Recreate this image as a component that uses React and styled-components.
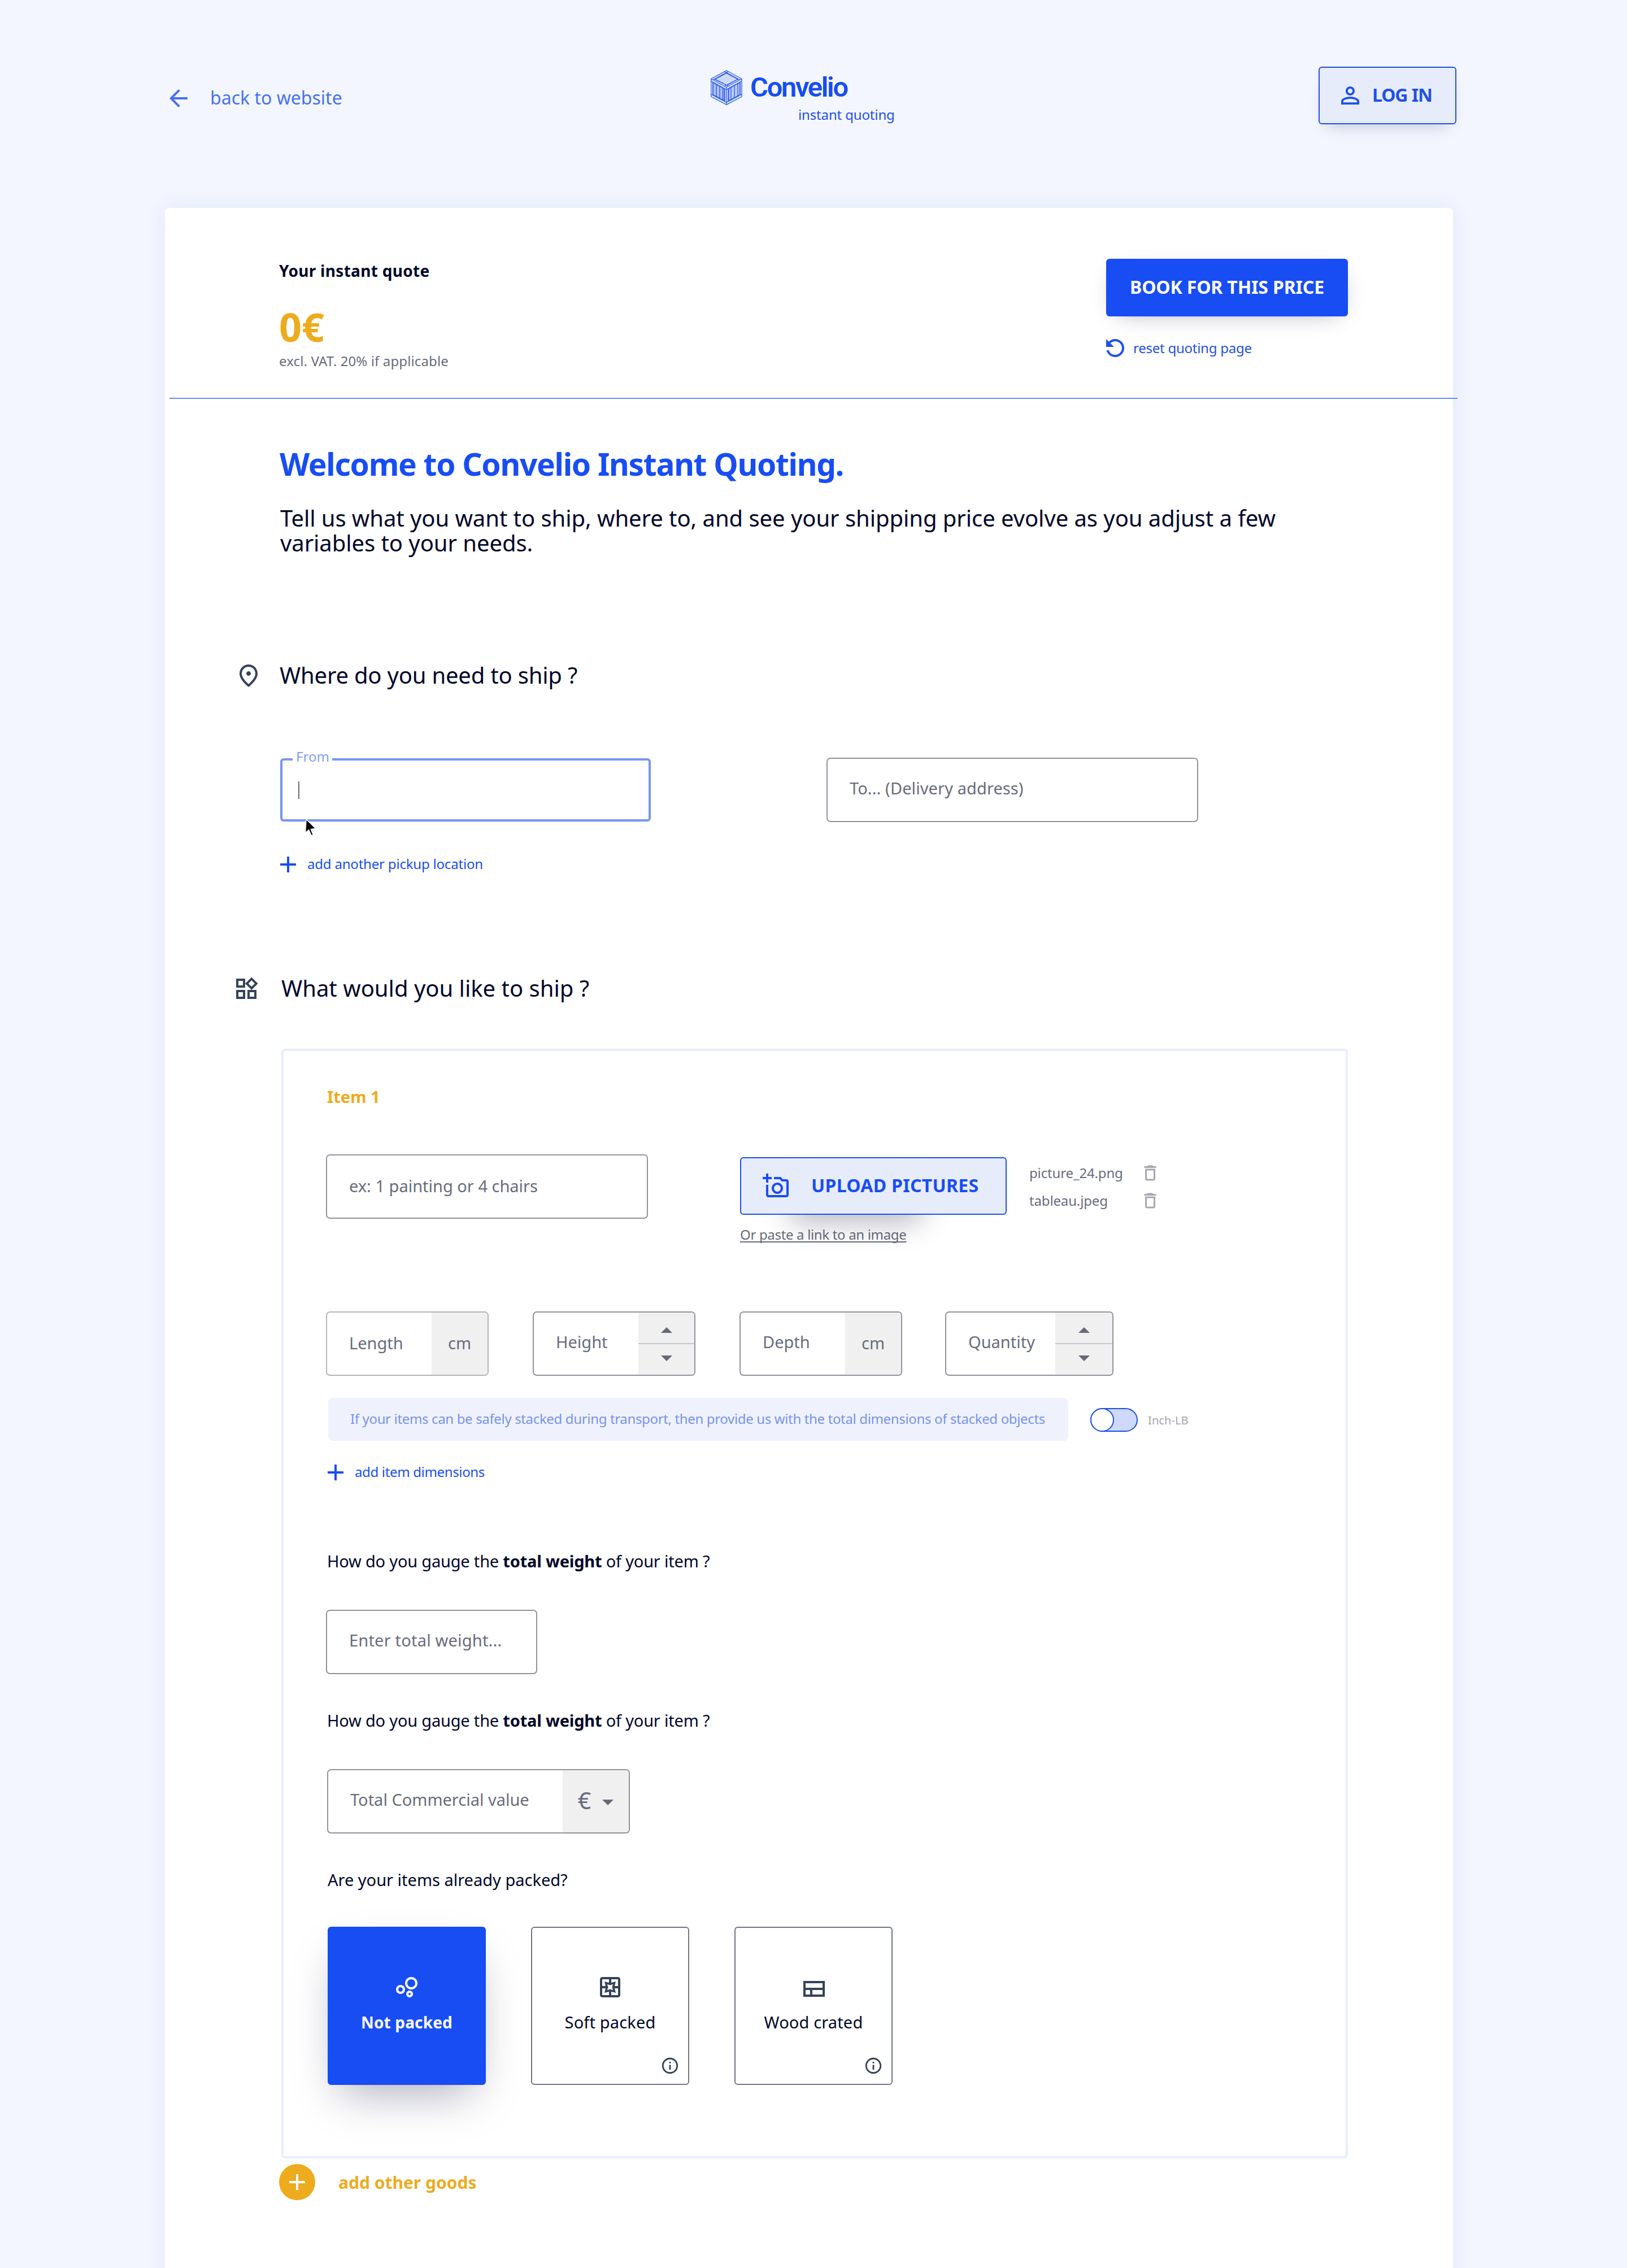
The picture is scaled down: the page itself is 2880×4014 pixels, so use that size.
import React from 'react'
import styled, { createGlobalStyle, ThemeProvider } from 'styled-components'
import {
  MdAdd,
  MdArrowBack,
  MdDeleteOutline,
  MdInfoOutline,
  MdOutlineAddAPhoto,
  MdOutlineBubbleChart,
  MdOutlinePages,
  MdOutlinePlace,
  MdOutlineWidgets,
  MdPersonOutline,
  MdRefresh,
} from 'react-icons/md'

const theme = {
  color: {
    page: '#f3f6ff',
    primary: '#184df4',
    primaryText: '#1f50e8',
    primarySoft: '#4772ee',
    primaryPale: '#7795f2',
    primaryTint: '#e7ecfb',
    accent: '#eeab1e',
    text: '#00062a',
    icon: '#35425a',
    muted: '#686b7c',
    border: '#92929c',
    addon: '#f0f0f0',
  },
}

const GlobalStyle = createGlobalStyle`
  *, *::before, *::after {
    box-sizing: border-box;
  }

  body {
    margin: 0;
    background: #f3f6ff;
    font-family: "Noto Sans", "Liberation Sans", sans-serif;
  }

  svg {
    display: block;
    flex-shrink: 0;
  }
`

const Page = styled.div`
  width: 2880px;
  height: 4014px;
  overflow: hidden;
  background: ${props => props.theme.color.page};
  color: ${props => props.theme.color.text};
`

const Header = styled.header`
  display: grid;
  grid-template-columns: 966px 1fr auto;
  align-items: start;
  height: 368px;
  padding: 118px 302px 0 292px;
`

const BackLink = styled.a`
  display: flex;
  align-items: center;
  gap: 32px;
  margin-top: 32px;
  color: ${props => props.theme.color.primarySoft};
  font-size: 32px;
  line-height: 43px;

  span {
    padding-bottom: 4px;
  }
`

const Logo = styled.div`
  margin-top: 6px;
`

const LogoRow = styled.div`
  display: flex;
  align-items: center;
  gap: 14px;
`

const LogoName = styled.div`
  color: ${props => props.theme.color.primary};
  font-family: Roboto, "Noto Sans", sans-serif;
  font-size: 49px;
  font-weight: 600;
  line-height: 62px;
  letter-spacing: -2.4px;
`

const LogoTagline = styled.div`
  margin: 1px 0 0 155px;
  color: ${props => props.theme.color.primaryText};
  font-size: 24px;
  line-height: 32px;
  letter-spacing: -0.15px;
`

const Button = styled.button`
  position: relative;
  display: flex;
  align-items: center;
  width: ${props => props.$width}px;
  height: 102px;
  padding: 0;
  border: 2px solid ${props => props.theme.color.primaryText};
  border-radius: 6px;
  background: ${props => props.theme.color.primaryTint};
  color: ${props => props.theme.color.primaryText};
  font-family: inherit;
  font-size: 32px;
  font-weight: bold;
  line-height: 42px;
  white-space: nowrap;

  span {
    padding-bottom: 3px;
  }
`

const LoginButton = styled(Button)`
  gap: 15px;
  padding-left: 30px;
  letter-spacing: -1.1px;
  box-shadow: 0 16px 30px -14px rgba(0, 6, 42, 0.2);
`

const BookButton = styled(Button)`
  justify-content: center;
  border-color: ${props => props.theme.color.primary};
  background: ${props => props.theme.color.primary};
  color: #fff;
  letter-spacing: -0.15px;
  box-shadow: 2px 10px 44px -20px rgba(0, 10, 60, 0.42);
`

const UploadButton = styled(Button)`
  gap: 38px;
  padding-left: 38px;
  color: ${props => props.theme.color.primary};
  letter-spacing: 0.3px;
`

// The shadow is narrower than the button and sits towards its left side
const UploadWrap = styled.div`
  position: relative;
  z-index: 0;

  &::before {
    content: "";
    position: absolute;
    z-index: -1;
    top: 30px;
    left: 90px;
    width: 230px;
    height: 66px;
    border-radius: 6px;
    box-shadow: 0 16px 54px rgba(0, 6, 42, 0.32);
  }
`

const Card = styled.main`
  width: 2280px;
  height: 3700px;
  margin-left: 292px;
  border-radius: 8px;
  background: #fff;
  box-shadow: 0 0 36px rgba(40, 80, 180, 0.09);
`

const QuoteBar = styled.section`
  display: flex;
  justify-content: space-between;
  height: 336px;
  padding: 90px 186px 0 202px;
`

const QuoteTitle = styled.div`
  margin-top: 3px;
  font-size: 28px;
  font-weight: bold;
  line-height: 36px;
  letter-spacing: 0.3px;
`

const Price = styled.div`
  margin-top: 41px;
  color: ${props => props.theme.color.accent};
  font-size: 70px;
  font-weight: bold;
  line-height: 80px;
`

const Vat = styled.div`
  margin-top: 5px;
  color: ${props => props.theme.color.muted};
  font-size: 24px;
  line-height: 32px;
  letter-spacing: 0.12px;
`

const ResetLink = styled.a`
  display: flex;
  align-items: center;
  gap: 8px;
  margin: 32px 0 0 -8px;
  color: ${props => props.theme.color.primaryText};
  font-size: 24px;
  line-height: 32px;
  letter-spacing: -0.25px;

  svg {
    transform: scaleX(-1);
  }
`

const Divider = styled.div`
  width: 2280px;
  height: 2px;
  margin-left: 8px;
  background: #6f8de8;
`

const Intro = styled.section`
  padding: 83px 0 0 203px;
`

const Welcome = styled.h1`
  margin: 0;
  color: ${props => props.theme.color.primary};
  font-size: 55px;
  line-height: 64px;
  letter-spacing: -1.28px;
`

const Lead = styled.p`
  margin: 42px 0 0 1px;
  font-size: 40px;
  line-height: 44px;
  letter-spacing: -0.06px;
`

const SectionTitle = styled.h2`
  display: flex;
  align-items: center;
  gap: ${props => props.$gap}px;
  margin: ${props => props.$top}px 0 0;
  padding-left: ${props => props.$left}px;
  font-size: 40px;
  font-weight: normal;
  line-height: 45px;
  letter-spacing: ${props => props.$spacing || 0}px;

  svg {
    color: ${props => props.theme.color.icon};
  }

  span {
    padding-bottom: 3px;
  }
`

const Addresses = styled.div`
  display: flex;
  align-items: flex-start;
  gap: 311px;
  padding: 121px 0 0 204px;
`

const FocusedField = styled.div`
  position: relative;
  display: flex;
  align-items: center;
  width: 656px;
  height: 112px;
  margin-top: 1px;
  padding-left: 28px;
  border: 4px solid ${props => props.theme.color.primaryPale};
  border-radius: 6px;
`

const FloatingLabel = styled.span`
  position: absolute;
  top: -21px;
  left: 18px;
  width: 70px;
  padding-left: 6px;
  background: #fff;
  color: #86a0ef;
  font-size: 24px;
  line-height: 28px;
`

const Caret = styled.span`
  width: 2px;
  height: 31px;
  background: ${props => props.theme.color.muted};
`

const Pointer = styled.svg`
  position: absolute;
  top: 102px;
  left: 38px;
`

const Field = styled.div`
  display: flex;
  width: ${props => props.$width}px;
  height: 114px;
  margin-left: ${props => props.$left || 0}px;
  border: 2px solid ${props => props.$light ? '#b4b4b9' : props.theme.color.border};
  border-radius: 7px;
  overflow: hidden;
`

const Placeholder = styled.div`
  flex: 1;
  align-self: center;
  padding: 0 0 ${props => props.$lift === undefined ? 6 : props.$lift}px 39px;
  color: ${props => props.theme.color.muted};
  font-size: 29px;
  line-height: 40px;
  letter-spacing: ${props => props.$spacing || 0}px;
  white-space: nowrap;
`

const Addon = styled.div`
  display: flex;
  align-items: center;
  justify-content: center;
  width: ${props => props.$width || 99}px;
  background: ${props => props.theme.color.addon};
  color: ${props => props.theme.color.muted};
  font-size: 29px;
  line-height: 38px;

  span {
    padding-bottom: 3px;
  }
`

const Spinner = styled(Addon)`
  flex-direction: column;
`

const Step = styled.div`
  display: flex;
  align-items: center;
  justify-content: center;
  width: 100%;
  height: 54px;

  &:first-child {
    padding-top: 8px;
  }

  &:last-child {
    height: 56px;
    padding-bottom: 5px;
    border-top: 2px solid #c8c8ca;
  }
`

const Currency = styled(Addon)`
  gap: 20px;
  font-size: 41px;
  line-height: 48px;

  span {
    padding-bottom: 5px;
  }

  svg {
    margin-top: 3px;
  }
`

const AddLink = styled.a`
  display: flex;
  align-items: center;
  gap: 10px;
  margin: ${props => props.$top}px 0 0 ${props => props.$left}px;
  color: ${props => props.theme.color.primary};
  font-size: 24px;
  line-height: 32px;
  letter-spacing: ${props => props.$spacing}px;

  span {
    padding-bottom: 2px;
  }
`

const ItemPanel = styled.section`
  width: 1888px;
  height: 1964px;
  margin: 82px 0 0 206px;
  padding: 63px 0 0 75px;
  border: 4px solid #e8edfb;
  border-radius: 6px;
`

const ItemTitle = styled.h3`
  margin: 0 0 84px 2px;
  color: ${props => props.theme.color.accent};
  font-size: 29px;
  font-weight: bold;
  line-height: 36px;
`

const DescriptionRow = styled.div`
  display: flex;
  align-items: flex-start;
  height: 157px;
`

const Upload = styled.div`
  margin: 5px 0 0 163px;
`

const PasteLink = styled.a`
  display: block;
  margin-top: 19px;
  color: ${props => props.theme.color.muted};
  font-size: 24px;
  line-height: 32px;
  letter-spacing: -0.33px;
  text-decoration: underline;
  text-decoration-skip-ink: none;
  text-decoration-thickness: 1.5px;
  text-underline-offset: 3px;
`

const Files = styled.div`
  margin: 8px 0 0 40px;
`

const FileRow = styled.div`
  display: grid;
  grid-template-columns: 196px 36px;
  align-items: center;
  height: 49px;
  color: ${props => props.theme.color.muted};
  font-size: 24px;
  line-height: 32px;
  letter-spacing: -0.15px;

  svg {
    color: #a6a6b0;
  }
`

const Dimensions = styled.div`
  display: grid;
  grid-template-columns: 366px 366px 364px 298px;
  margin-top: 121px;
`

const HintRow = styled.div`
  display: flex;
  align-items: center;
  margin: 39px 0 0 4px;
`

const Hint = styled.div`
  width: 1310px;
  height: 76px;
  padding: 21px 0 0 39px;
  border-radius: 8px;
  background: #eff2fc;
  color: #7893ea;
  font-size: 24px;
  line-height: 32px;
  letter-spacing: -0.35px;
  white-space: nowrap;
`

const Toggle = styled.div`
  width: 84px;
  height: 42px;
  margin: 2px 18px 0 39px;
  border: 2px solid ${props => props.theme.color.primaryText};
  border-radius: 21px;
  background: #ced9fb;
`

const Knob = styled.div`
  width: 42px;
  height: 42px;
  margin: -2px 0 0 -2px;
  border: 2px solid ${props => props.theme.color.primaryText};
  border-radius: 50%;
  background: #fff;
`

const UnitSystem = styled.div`
  padding-top: 3px;
  color: #a3a4ac;
  font-size: 20px;
  line-height: 28px;
  letter-spacing: 0.1px;
`

const Question = styled.p`
  margin: ${props => props.$top}px 0 ${props => props.$bottom}px ${props => props.$left}px;
  font-size: 29px;
  line-height: 36px;
  letter-spacing: ${props => props.$spacing || 0}px;
`

const Packings = styled.div`
  display: flex;
  gap: 80px;
  margin-left: 3px;
`

const Packing = styled.div`
  position: relative;
  display: flex;
  flex-direction: column;
  align-items: center;
  gap: 20px;
  width: 280px;
  height: 280px;
  padding-top: 81px;
  border: 2px solid ${props => props.$active ? props.theme.color.primary : '#6f7582'};
  border-radius: 6px;
  background: ${props => props.$active ? props.theme.color.primary : '#fff'};
  color: ${props => props.$active ? '#fff' : props.theme.color.icon};
  box-shadow: ${props => props.$active ? '0 36px 76px -24px rgba(0, 10, 60, 0.34)' : 'none'};
`

const PackingName = styled.div`
  color: ${props => props.$active ? '#fff' : props.theme.color.text};
  font-size: ${props => props.$active ? 28 : 29}px;
  font-weight: ${props => props.$active ? 'bold' : 'normal'};
  line-height: 36px;
  letter-spacing: 0.15px;
`

const BubbleIcon = styled(MdOutlineBubbleChart)`
  margin-right: 3px;
`

const InfoBadge = styled.span`
  position: absolute;
  right: 15px;
  bottom: 15px;
`

const AddGoods = styled.a`
  display: flex;
  align-items: center;
  gap: 41px;
  padding: 10px 0 0 202px;
  color: ${props => props.theme.color.accent};
  font-size: 30px;
  font-weight: bold;
`

const RoundPlus = styled.span`
  display: flex;
  align-items: center;
  justify-content: center;
  width: 64px;
  height: 64px;
  border-radius: 50%;
  background: ${props => props.theme.color.accent};
  color: #fff;
`

const Triangle = ({ up }) => (
  <svg width="20" height="10" viewBox="0 0 20 10">
    <path d={up ? 'M0 10L10 0L20 10Z' : 'M0 0L10 10L20 0Z'} fill="#66697a" />
  </svg>
)

const CrateLogo = () => (
  <svg width="56" height="62" viewBox="0 0 56 62" fill="none" stroke="#2a5ae6" strokeWidth="1.3" strokeLinejoin="round">
    <path d="M27.8 .8L55 15.5V47L27.8 61.3L.8 47V15.5Z" fill="#e6ecfe" />
    <path d="M4 22L24 33V54L4 43.5Z" fill="#abbffa" />
    <path d="M32 33L52 22V43.5L32 54Z" fill="#bccbfb" />
    <path d="M27.8 5.5L48 16.3L29 27L7.5 16.3Z" fill="#cfdafb" />
    <path d="M.8 15.5L27.8 30.5L55 15.5M.8 19.5L27.8 34.5L55 19.5" />
    <path d="M24.5 2.6L51.5 17.4M31 2.6L4 17.4M24.5 28.5L48 16.3M31.5 28.5L7.5 16.3" />
    <path d="M.8 43L27.8 57.3L55 43" />
    <path d="M27.8 30.5V61.3M3.8 21V44.6M10 24.7V48M16 28V51M21.5 31V54M25 33V56M30.8 33V56M36 30V53M42 27V50M48 23.5V46.8M52.2 21V44.6" />
  </svg>
)

const CrateIcon = () => (
  <svg width="48" height="48" viewBox="0 0 48 48" fill="none" stroke="currentColor" strokeWidth="4">
    <path d="M8 15H42V39H8ZM8 27H42M20 27V39" />
  </svg>
)

const packings = [
  { name: 'Not packed', icon: <BubbleIcon size={48} />, active: true },
  { name: 'Soft packed', icon: <MdOutlinePages size={48} /> },
  { name: 'Wood crated', icon: <CrateIcon /> },
]

const files = ['picture_24.png', 'tableau.jpeg']

const StepButtons = ({ width }) => (
  <Spinner $width={width}>
    <Step><Triangle up /></Step>
    <Step><Triangle /></Step>
  </Spinner>
)

const TopBar = () => (
  <Header>
    <BackLink>
      <MdArrowBack size={48} />
      <span>back to website</span>
    </BackLink>
    <Logo>
      <LogoRow>
        <CrateLogo />
        <LogoName>Convelio</LogoName>
      </LogoRow>
      <LogoTagline>instant quoting</LogoTagline>
    </Logo>
    <LoginButton $width={244}>
      <MdPersonOutline size={48} />
      <span>LOG IN</span>
    </LoginButton>
  </Header>
)

const Quote = () => (
  <QuoteBar>
    <div>
      <QuoteTitle>Your instant quote</QuoteTitle>
      <Price>0€</Price>
      <Vat>excl. VAT. 20% if applicable</Vat>
    </div>
    <div>
      <BookButton $width={428}>
        <span>BOOK FOR THIS PRICE</span>
      </BookButton>
      <ResetLink>
        <MdRefresh size={48} />
        reset quoting page
      </ResetLink>
    </div>
  </QuoteBar>
)

const Where = () => (
  <section>
    <SectionTitle $top={189} $left={124} $gap={31} $spacing={-0.2}>
      <MdOutlinePlace size={48} />
      <span>Where do you need to ship ?</span>
    </SectionTitle>
    <Addresses>
      <div>
        <FocusedField>
          <FloatingLabel>From</FloatingLabel>
          <Caret />
          <Pointer width="24" height="34" viewBox="0 0 24 34">
            <path d="M4 2L2.5 26L8.6 20.8L13.4 31L16.4 29.6L12.4 19.8L20.5 18Z" fill="#000" stroke="#fff" strokeWidth="1.5" />
          </Pointer>
        </FocusedField>
        <AddLink $top={52} $left={-10} $spacing={-0.2}>
          <MdAdd size={48} />
          <span>add another pickup location</span>
        </AddLink>
      </div>
      <Field $width={658}>
        <Placeholder $spacing={0.1}>To... (Delivery address)</Placeholder>
      </Field>
    </Addresses>
  </section>
)

const WeightQuestion = ({ top }) => (
  <Question $top={top} $bottom={68} $left={2} $spacing={-0.2}>
    How do you gauge the <strong>total weight</strong> of your item ?
  </Question>
)

const Item = () => (
  <ItemPanel>
    <ItemTitle>Item 1</ItemTitle>
    <DescriptionRow>
      <Field $width={570}>
        <Placeholder $lift={2}>ex: 1 painting or 4 chairs</Placeholder>
      </Field>
      <Upload>
        <UploadWrap>
          <UploadButton $width={472}>
            <MdOutlineAddAPhoto size={48} />
            <span>UPLOAD PICTURES</span>
          </UploadButton>
        </UploadWrap>
        <PasteLink>Or paste a link to an image</PasteLink>
      </Upload>
      <Files>
        {files.map(file => (
          <FileRow key={file}>
            {file}
            <MdDeleteOutline size={36} />
          </FileRow>
        ))}
      </Files>
    </DescriptionRow>
    <Dimensions>
      <Field $width={288} $light>
        <Placeholder $lift={3}>Length</Placeholder>
        <Addon><span>cm</span></Addon>
      </Field>
      <Field $width={288}>
        <Placeholder>Height</Placeholder>
        <StepButtons />
      </Field>
      <Field $width={288}>
        <Placeholder>Depth</Placeholder>
        <Addon><span>cm</span></Addon>
      </Field>
      <Field $width={298}>
        <Placeholder>Quantity</Placeholder>
        <StepButtons width={101} />
      </Field>
    </Dimensions>
    <HintRow>
      <Hint>
        If your items can be safely stacked during transport, then provide us with the total dimensions of stacked objects
      </Hint>
      <Toggle><Knob /></Toggle>
      <UnitSystem>Inch-LB</UnitSystem>
    </HintRow>
    <AddLink $top={32} $left={-7} $spacing={-0.35}>
      <MdAdd size={48} />
      <span>add item dimensions</span>
    </AddLink>
    <WeightQuestion top={115} />
    <Field $width={374}>
      <Placeholder $spacing={0.2}>Enter total weight...</Placeholder>
    </Field>
    <WeightQuestion top={64} />
    <Field $width={536} $left={2}>
      <Placeholder>Total Commercial value</Placeholder>
      <Currency $width={117}>
        <span>€</span>
        <Triangle />
      </Currency>
    </Field>
    <Question $top={64} $bottom={65} $left={3}>Are your items already packed?</Question>
    <Packings>
      {packings.map(({ name, icon, active }) => (
        <Packing key={name} $active={active}>
          {icon}
          <PackingName $active={active}>{name}</PackingName>
          { !active && <InfoBadge><MdInfoOutline size={34} /></InfoBadge> }
        </Packing>
      ))}
    </Packings>
  </ItemPanel>
)

const App = () => (
  <ThemeProvider theme={theme}>
    <GlobalStyle />
    <Page>
      <TopBar />
      <Card>
        <Quote />
        <Divider />
        <Intro>
          <Welcome>Welcome to Convelio Instant Quoting.</Welcome>
          <Lead>
            Tell us what you want to ship, where to, and see your shipping price evolve as you adjust a few<br />
            variables to your needs.
          </Lead>
        </Intro>
        <Where />
        <SectionTitle $top={172} $left={120} $gap={38}>
          <MdOutlineWidgets size={48} />
          <span>What would you like to ship ?</span>
        </SectionTitle>
        <Item />
        <AddGoods>
          <RoundPlus><MdAdd size={48} /></RoundPlus>
          add other goods
        </AddGoods>
      </Card>
    </Page>
  </ThemeProvider>
)

export default App
